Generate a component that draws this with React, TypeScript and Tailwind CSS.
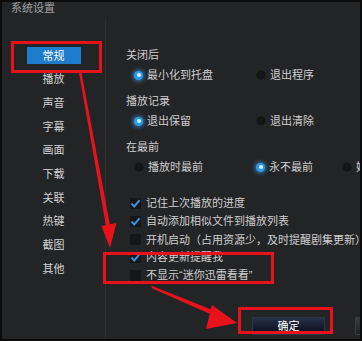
import React from "react";

const font = { fontFamily: '"Liberation Sans","Noto Sans CJK SC",sans-serif' };
const cjk = { fontFamily: '"Noto Sans CJK SC",sans-serif' };

function Radio({ on }: { on?: boolean }) {
  if (on)
    return (
      <span className="relative flex h-[9px] w-[9px] shrink-0 items-center justify-center rounded-full bg-[#2a9be8] shadow-[0_0_4px_1px_rgba(60,170,255,0.7)]">
        <span className="h-[4px] w-[4px] rounded-full bg-[#d8f0ff]" />
      </span>
    );
  return <span className="h-[10px] w-[10px] shrink-0 rounded-full bg-[#141516] shadow-[inset_0_0_1px_rgba(255,255,255,0.15)]" />;
}

function Check({ on }: { on?: boolean }) {
  return (
    <span className="flex h-[11px] w-[11px] shrink-0 items-center justify-center bg-[#151617]">
      {on && (
        <svg width="11" height="11" viewBox="0 0 11 11">
          <path d="M1.5 5.5 L4.3 8.4 L9.6 2.2" fill="none" stroke="#3f8fdc" strokeWidth="2" />
        </svg>
      )}
    </span>
  );
}

const side = ["常规", "播放", "声音", "字幕", "画面", "下载", "关联", "热键", "截图", "其他"];

function Section({ title, opts }: { title: string; opts: [string, boolean, string][] }) {
  return (
    <div className="h-[46px]">
      <div className="h-4 leading-4">{title}</div>
      <div className="mt-[2px] flex h-5 items-center pl-[8px]">
        {opts.map(([t, on, w]) => (
          <div key={t} className={`flex shrink-0 items-center gap-[4px] ${w}`}>
            <Radio on={on} />
            <span className="whitespace-nowrap">{t}</span>
          </div>
        ))}
      </div>
    </div>
  );
}

export default function App() {
  const checks: [string, boolean, boolean][] = [
    ["记住上次播放的进度", true, false],
    ["自动添加相似文件到播放列表", true, false],
    ["开机启动（占用资源少，及时提醒剧集更新）", false, true],
    ["内容更新提醒我", true, false],
    ["不显示“迷你迅雷看看”", false, false],
  ];
  return (
    <div
      className="relative flex h-[341px] w-[362px] flex-col overflow-hidden border-2 border-[#0b0b0c] bg-[#232426] text-[11px] text-[#cfcfcf]"
      style={font}
    >
      <div className="h-[17px] pl-[9px] leading-[12px] text-[#a0a0a0]">系统设置</div>
      <div className="flex flex-1">
        <div className="w-[104px] shrink-0 border-r border-[#2f3033] pt-[25px]">
          {side.map((s, i) => (
            <div key={s} className="flex h-[23.7px] items-center justify-center">
              {i === 0 ? (
                <span className="flex h-[17px] w-[54px] items-center justify-center bg-[#1d7ccc] text-white">{s}</span>
              ) : (
                <span className="text-[#d4d4d4]">{s}</span>
              )}
            </div>
          ))}
        </div>
        <div className="min-w-0 flex-1 overflow-hidden pl-[20px] pt-[28px]">
          <Section title="关闭后" opts={[["最小化到托盘", true, "w-[122px]"], ["退出程序", false, "w-[86px]"]]} />
          <Section title="播放记录" opts={[["退出保留", true, "w-[122px]"], ["退出清除", false, "w-[86px]"]]} />
          <Section
            title="在最前"
            opts={[["播放时最前", false, "w-[122px]"], ["永不最前", true, "w-[86px]"], ["始终最前", false, "w-[86px]"]]}
          />
          <div className="mt-[9px]">
            {checks.map(([t, on, wide]) => (
              <div key={t} className="flex h-[18px] items-center gap-[5px] pl-[4px]">
                <Check on={on} />
                <span className="whitespace-nowrap" style={wide ? cjk : undefined}>
                  {t}
                </span>
              </div>
            ))}
          </div>
          <div className="mt-[33px] flex h-[18px] items-stretch pl-[126px]">
            <div className="flex w-[73px] shrink-0 items-center justify-center border border-[#2c3448] bg-gradient-to-b from-[#26304a] to-[#0a0e1b] text-white">
              确定
            </div>
            <div className="ml-[30px] w-[73px] shrink-0 border border-[#3a3b3e] bg-gradient-to-b from-[#3a3b3e] to-[#1f2022]" />
          </div>
        </div>
      </div>
      <svg className="pointer-events-none absolute left-[-2px] top-[-2px]" width="362" height="341" viewBox="0 0 362 341">
        <g fill="none" stroke="#e8121b" strokeWidth="3">
          <rect x="12.5" y="42.5" width="88" height="29" />
          <rect x="104.5" y="253.5" width="168" height="29" />
          <rect x="239.5" y="308.5" width="92" height="24" />
        </g>
        <g fill="#e8121b">
          <path d="M79 73 L81.5 72.6 L110.5 228 L106.5 228.8 Z" />
          <path d="M101.5 226 L116.5 223 L110 248 Z" />
          <path d="M151 285.5 L152.5 288.5 L218 317.5 L220 313 Z" />
          <path d="M212 305 L237 323 L206 329 Z" />
        </g>
      </svg>
    </div>
  );
}
